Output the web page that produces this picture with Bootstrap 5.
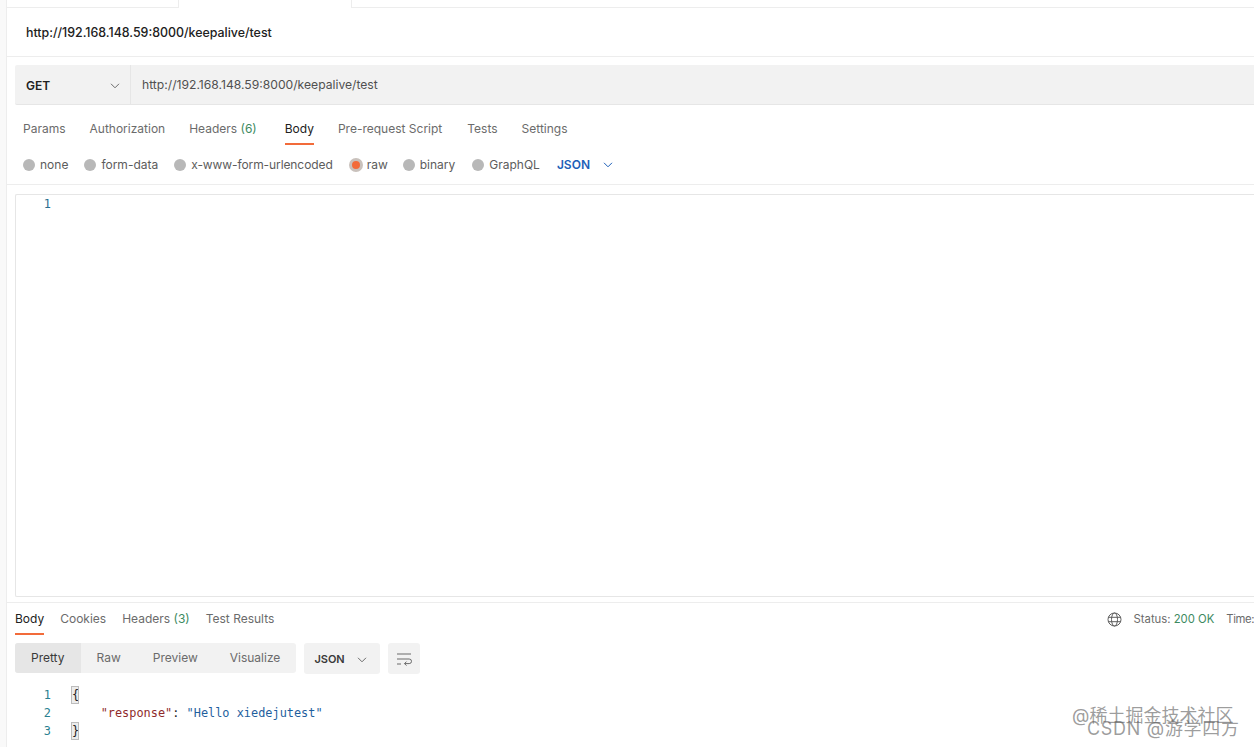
<!DOCTYPE html>
<html lang="en">
<head>
<meta charset="utf-8">
<title>Postman</title>
<link href="https://cdn.jsdelivr.net/npm/bootstrap@5.3.0/dist/css/bootstrap.min.css" rel="stylesheet">
<style>
html,body{height:747px;overflow:hidden;background:#fff}
body{font-family:Inter,"Liberation Sans",sans-serif;font-size:12px;color:#6b6b6b;width:1254px;position:relative}
.shell{height:747px}
.siderail{width:7px;flex:none;background:#f9f9f9;border-right:1px solid #ededed}
.mainpane{width:1247px;flex:none;overflow:hidden}
.tabstrip{height:8px;border-bottom:1px solid #ededed;padding-left:171px}
.tabstrip-active{width:174px;height:8px;background:#fff;border-left:1px solid #ededed;border-right:1px solid #ededed}
.titlerow{height:49px;border-bottom:1px solid #ededed;padding:2px 0 0 19px;color:#212121;font-weight:500;font-size:12.4px}
.urlbar{height:40px;margin:8px 0 0 8px;background:#f2f2f2;border-bottom:1px solid #e6e6e6;border-radius:2px 0 0 2px}
.methodbox{width:116px;padding:2px 10px 0 11px;color:#212121;font-weight:600;font-size:12px;border-right:1px solid #e6e6e6;height:100%}
.urltext{padding:2px 0 0 11px;color:#505050;font-size:12.15px}
.tabsrow{height:32px;margin-top:8px;padding-left:16px;gap:24px}
.tabitem{height:32px;line-height:31px;color:#6b6b6b;border-bottom:2px solid transparent}
.tabitem.isactive{color:#212121;border-bottom-color:#f26b3a}
.tabsrow .isactive{margin-left:4px}
.tabsrow .nudged{margin-left:1px}
.countgreen{color:#3d8a5f}
.bodytypes{height:40px;padding-left:16px;border-bottom:1px solid #ededed}
.radioitem{margin-right:16px;color:#5c5c5c}
.radioitem.rawitem{margin-right:15px}
.radioitem.binaryitem{margin-right:17px}
.radiodot{width:12px;height:12px;border-radius:50%;background:#b8b8b8;margin-right:5px;flex:none}
.radiodot.ison{width:14px;height:14px;margin-right:4px;background:#f26b3a;border:3px solid #c9c1bc}
.tightlabel{letter-spacing:-.09px}
.jsonpick{color:#1d5fb8;font-weight:600;margin-left:1px}
.jsonpick svg{margin-left:5px}
.editorbox{height:403px;margin:9px 0 0 8px;border:1px solid #e6e6e6;border-right:0;border-radius:2px 0 0 2px}
.gutternum{font-family:"DejaVu Sans Mono","Liberation Mono",monospace;font-size:11.9px;line-height:18px;color:#2a6f8f;width:35px;text-align:right;flex:none}
.resphead{height:33px;margin-top:5px;border-top:1px solid #ededed;padding-left:8px;gap:16px}
.resphead .tabitem{height:32px;line-height:31px}
.statusbit{margin-left:auto;font-size:11.3px;padding-top:1px;white-space:nowrap;color:#6b6b6b}
.statusok{color:#3d8a5f}
.timelabel{margin-left:12px;letter-spacing:-.4px}
.toolrow{margin:8px 0 0 8px;height:30px;gap:8px}
.segmented{background:#f2f2f2;border-radius:3px;height:30px}
.segitem{padding:0 16px;line-height:30px;color:#6b6b6b}
.segitem.isactive{background:#e6e6e6;color:#3a3a3a;border-radius:3px 0 0 3px}
.smallpick{width:76px;height:31px;background:#f2f2f2;border-radius:3px;color:#3a3a3a;font-weight:600;font-size:11px;padding:2px 13px 0 10px}
.smallsquare{width:32px;height:31px;background:#f2f2f2;border-radius:3px}
.respcode{margin-top:13px;font-family:"DejaVu Sans Mono","Liberation Mono",monospace;font-size:11.9px;line-height:18px;height:54px;padding-left:8px}
.respcode .gutternum{width:36px;color:#2a7f8f}
.codecol{padding-left:21px;color:#212121;white-space:pre}
.brace{display:inline-block;background:#ececec;outline:1px solid #bcbcbc;width:6px;line-height:16px;height:16px;text-align:center}
.strkey{color:#8f2b2b}
.strval{color:#1f5f9e}
.wmark{position:absolute;color:rgba(90,90,90,.6);font-family:Inter,"Noto Sans CJK SC",sans-serif;white-space:nowrap}
.wmark-a{left:1072px;top:704px;font-size:18px;line-height:24px}
.wmark-b{left:1087px;top:717px;font-size:18px;line-height:24px;letter-spacing:.7px}
</style>
</head>
<body>
<div class="shell d-flex">
  <div class="siderail"></div>
  <div class="mainpane">
    <div class="tabstrip d-flex">
      <div class="tabstrip-active"></div>
    </div>
    <div class="titlerow d-flex align-items-center">http://192.168.148.59:8000/keepalive/test</div>
    <div class="urlbar d-flex align-items-center">
      <div class="methodbox d-flex align-items-center justify-content-between">
        <span>GET</span>
        <svg width="10" height="6" viewBox="0 0 10 6" fill="none" stroke="#6b6b6b" stroke-width="1"><path d="M1 .8l4 4 4-4"/></svg>
      </div>
      <div class="urltext">http://192.168.148.59:8000/keepalive/test</div>
    </div>
    <div class="tabsrow d-flex">
      <div class="tabitem">Params</div>
      <div class="tabitem">Authorization</div>
      <div class="tabitem">Headers <span class="countgreen">(6)</span></div>
      <div class="tabitem isactive">Body</div>
      <div class="tabitem">Pre-request Script</div>
      <div class="tabitem nudged">Tests</div>
      <div class="tabitem">Settings</div>
    </div>
    <div class="bodytypes d-flex align-items-center">
      <div class="radioitem d-flex align-items-center"><span class="radiodot"></span>none</div>
      <div class="radioitem d-flex align-items-center"><span class="radiodot"></span>form-data</div>
      <div class="radioitem d-flex align-items-center tightlabel"><span class="radiodot"></span>x-www-form-urlencoded</div>
      <div class="radioitem rawitem d-flex align-items-center"><span class="radiodot ison"></span>raw</div>
      <div class="radioitem binaryitem d-flex align-items-center"><span class="radiodot"></span>binary</div>
      <div class="radioitem d-flex align-items-center"><span class="radiodot"></span>GraphQL</div>
      <div class="jsonpick d-flex align-items-center gap-2">JSON
        <svg width="10" height="6" viewBox="0 0 10 6" fill="none" stroke="#1d5fb8" stroke-width="1"><path d="M1 .8l4 4 4-4"/></svg>
      </div>
    </div>
    <div class="editorbox d-flex">
      <div class="gutternum">1</div>
    </div>
    <div class="resphead d-flex">
      <div class="tabitem isactive">Body</div>
      <div class="tabitem">Cookies</div>
      <div class="tabitem">Headers <span class="countgreen">(3)</span></div>
      <div class="tabitem">Test Results</div>
      <div class="statusbit d-flex align-items-center">
        <svg class="me-2" width="15" height="15" viewBox="0 0 15 15" fill="none" stroke="#5f5f5f" stroke-width="1"><circle cx="7.5" cy="7.5" r="6.5"/><ellipse cx="7.5" cy="7.5" rx="3" ry="6.5"/><path d="M1.3 5.3h12.4M1.3 9.7h12.4"/></svg>
        <span class="ms-1">Status: <span class="statusok">200 OK</span></span>
        <span class="timelabel">Time:</span>
      </div>
    </div>
    <div class="toolrow d-flex">
      <div class="segmented d-flex">
        <div class="segitem isactive">Pretty</div>
        <div class="segitem">Raw</div>
        <div class="segitem">Preview</div>
        <div class="segitem">Visualize</div>
      </div>
      <div class="smallpick d-flex align-items-center justify-content-between">JSON
        <svg width="10" height="6" viewBox="0 0 10 6" fill="none" stroke="#6b6b6b" stroke-width="1"><path d="M1 .8l4 4 4-4"/></svg>
      </div>
      <div class="smallsquare d-flex align-items-center justify-content-center">
        <svg width="16" height="14" viewBox="0 0 16 14" fill="none" stroke="#6b6b6b" stroke-width="1"><path d="M1 2h14M1 7h12.2a2.2 2.2 0 0 1 0 4.6H8.5M10.5 9.6l-2 2 2 2M1 12h4"/></svg>
      </div>
    </div>
    <div class="respcode d-flex">
      <div>
        <div class="gutternum">1</div>
        <div class="gutternum">2</div>
        <div class="gutternum">3</div>
      </div>
      <div class="codecol"><div><span class="brace">{</span></div><div>    <span class="strkey">"response"</span>: <span class="strval">"Hello xiedejutest"</span></div><div><span class="brace">}</span></div></div>
    </div>
  </div>
</div>
<div class="wmark wmark-a">@稀土掘金技术社区</div>
<div class="wmark wmark-b">CSDN @游学四方</div>
</body>
</html>
